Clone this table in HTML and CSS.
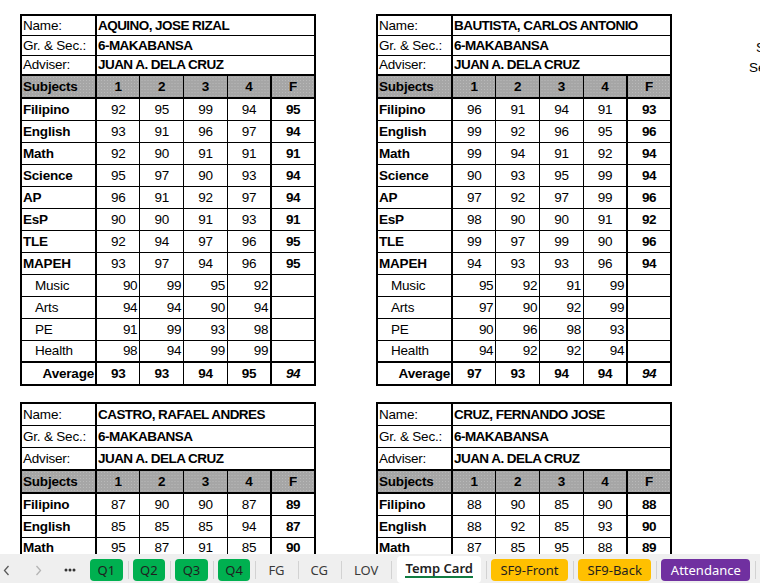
FILE: index.html
```html
<!DOCTYPE html>
<html>
<head>
<meta charset="utf-8">
<link rel="stylesheet" href="styles.css">
</head>
<body>
<main class="sheet">
  <table class="card">
    <colgroup><col class="c-lab"><col class="c-q"><col class="c-q"><col class="c-q"><col class="c-q"><col class="c-q"></colgroup>
    <tr class="info"><th class="lab">Name:</th><td colspan="5">AQUINO, JOSE RIZAL</td></tr>
    <tr class="info"><th class="lab">Gr. &amp; Sec.:</th><td colspan="5">6-MAKABANSA</td></tr>
    <tr class="info adv"><th class="lab">Adviser:</th><td colspan="5">JUAN A. DELA CRUZ</td></tr>
    <tr class="head"><th class="lab">Subjects</th><th>1</th><th>2</th><th>3</th><th>4</th><th class="fc">F</th></tr>
    <tr class="subj"><th class="lab">Filipino</th><td>92</td><td>95</td><td>99</td><td>94</td><td class="fc">95</td></tr>
    <tr class="subj"><th class="lab">English</th><td>93</td><td>91</td><td>96</td><td>97</td><td class="fc">94</td></tr>
    <tr class="subj"><th class="lab">Math</th><td>92</td><td>90</td><td>91</td><td>91</td><td class="fc">91</td></tr>
    <tr class="subj"><th class="lab">Science</th><td>95</td><td>97</td><td>90</td><td>93</td><td class="fc">94</td></tr>
    <tr class="subj"><th class="lab">AP</th><td>96</td><td>91</td><td>92</td><td>97</td><td class="fc">94</td></tr>
    <tr class="subj"><th class="lab">EsP</th><td>90</td><td>90</td><td>91</td><td>93</td><td class="fc">91</td></tr>
    <tr class="subj"><th class="lab">TLE</th><td>92</td><td>94</td><td>97</td><td>96</td><td class="fc">95</td></tr>
    <tr class="subj"><th class="lab">MAPEH</th><td>93</td><td>97</td><td>94</td><td>96</td><td class="fc">95</td></tr>
    <tr class="sub"><th class="lab">Music</th><td>90</td><td>99</td><td>95</td><td>92</td><td class="fc"></td></tr>
    <tr class="sub"><th class="lab">Arts</th><td>94</td><td>94</td><td>90</td><td>94</td><td class="fc"></td></tr>
    <tr class="sub"><th class="lab">PE</th><td>91</td><td>99</td><td>93</td><td>98</td><td class="fc"></td></tr>
    <tr class="sub"><th class="lab">Health</th><td>98</td><td>94</td><td>99</td><td>99</td><td class="fc"></td></tr>
    <tr class="avg"><th class="lab">Average</th><td>93</td><td>93</td><td>94</td><td>95</td><td class="fc">94</td></tr>
  </table>

  <table class="card">
    <colgroup><col class="c-lab"><col class="c-q"><col class="c-q"><col class="c-q"><col class="c-q"><col class="c-q"></colgroup>
    <tr class="info"><th class="lab">Name:</th><td colspan="5">BAUTISTA, CARLOS ANTONIO</td></tr>
    <tr class="info"><th class="lab">Gr. &amp; Sec.:</th><td colspan="5">6-MAKABANSA</td></tr>
    <tr class="info adv"><th class="lab">Adviser:</th><td colspan="5">JUAN A. DELA CRUZ</td></tr>
    <tr class="head"><th class="lab">Subjects</th><th>1</th><th>2</th><th>3</th><th>4</th><th class="fc">F</th></tr>
    <tr class="subj"><th class="lab">Filipino</th><td>96</td><td>91</td><td>94</td><td>91</td><td class="fc">93</td></tr>
    <tr class="subj"><th class="lab">English</th><td>99</td><td>92</td><td>96</td><td>95</td><td class="fc">96</td></tr>
    <tr class="subj"><th class="lab">Math</th><td>99</td><td>94</td><td>91</td><td>92</td><td class="fc">94</td></tr>
    <tr class="subj"><th class="lab">Science</th><td>90</td><td>93</td><td>95</td><td>99</td><td class="fc">94</td></tr>
    <tr class="subj"><th class="lab">AP</th><td>97</td><td>92</td><td>97</td><td>99</td><td class="fc">96</td></tr>
    <tr class="subj"><th class="lab">EsP</th><td>98</td><td>90</td><td>90</td><td>91</td><td class="fc">92</td></tr>
    <tr class="subj"><th class="lab">TLE</th><td>99</td><td>97</td><td>99</td><td>90</td><td class="fc">96</td></tr>
    <tr class="subj"><th class="lab">MAPEH</th><td>94</td><td>93</td><td>93</td><td>96</td><td class="fc">94</td></tr>
    <tr class="sub"><th class="lab">Music</th><td>95</td><td>92</td><td>91</td><td>99</td><td class="fc"></td></tr>
    <tr class="sub"><th class="lab">Arts</th><td>97</td><td>90</td><td>92</td><td>99</td><td class="fc"></td></tr>
    <tr class="sub"><th class="lab">PE</th><td>90</td><td>96</td><td>98</td><td>93</td><td class="fc"></td></tr>
    <tr class="sub"><th class="lab">Health</th><td>94</td><td>92</td><td>92</td><td>94</td><td class="fc"></td></tr>
    <tr class="avg"><th class="lab">Average</th><td>97</td><td>93</td><td>94</td><td>94</td><td class="fc">94</td></tr>
  </table>

  <div class="side">
    <div class="side-line side-a">SY:</div>
    <div class="side-line side-b">Sec</div>
  </div>

  <table class="card card-tall">
    <colgroup><col class="c-lab"><col class="c-q"><col class="c-q"><col class="c-q"><col class="c-q"><col class="c-q"></colgroup>
    <tr class="info"><th class="lab">Name:</th><td colspan="5">CASTRO, RAFAEL ANDRES</td></tr>
    <tr class="info"><th class="lab">Gr. &amp; Sec.:</th><td colspan="5">6-MAKABANSA</td></tr>
    <tr class="info adv"><th class="lab">Adviser:</th><td colspan="5">JUAN A. DELA CRUZ</td></tr>
    <tr class="head"><th class="lab">Subjects</th><th>1</th><th>2</th><th>3</th><th>4</th><th class="fc">F</th></tr>
    <tr class="subj"><th class="lab">Filipino</th><td>87</td><td>90</td><td>90</td><td>87</td><td class="fc">89</td></tr>
    <tr class="subj"><th class="lab">English</th><td>85</td><td>85</td><td>85</td><td>94</td><td class="fc">87</td></tr>
    <tr class="subj"><th class="lab">Math</th><td>95</td><td>87</td><td>91</td><td>85</td><td class="fc">90</td></tr>
  </table>

  <table class="card card-tall">
    <colgroup><col class="c-lab"><col class="c-q"><col class="c-q"><col class="c-q"><col class="c-q"><col class="c-q"></colgroup>
    <tr class="info"><th class="lab">Name:</th><td colspan="5">CRUZ, FERNANDO JOSE</td></tr>
    <tr class="info"><th class="lab">Gr. &amp; Sec.:</th><td colspan="5">6-MAKABANSA</td></tr>
    <tr class="info adv"><th class="lab">Adviser:</th><td colspan="5">JUAN A. DELA CRUZ</td></tr>
    <tr class="head"><th class="lab">Subjects</th><th>1</th><th>2</th><th>3</th><th>4</th><th class="fc">F</th></tr>
    <tr class="subj"><th class="lab">Filipino</th><td>88</td><td>90</td><td>85</td><td>90</td><td class="fc">88</td></tr>
    <tr class="subj"><th class="lab">English</th><td>88</td><td>92</td><td>85</td><td>93</td><td class="fc">90</td></tr>
    <tr class="subj"><th class="lab">Math</th><td>87</td><td>85</td><td>95</td><td>88</td><td class="fc">89</td></tr>
  </table>
</main>

<nav class="tabs">
  <span class="nav nav-prev"><svg width="7" height="11" viewBox="0 0 7 11"><path d="M5.5 1 L1.5 5.5 L5.5 10" fill="none" stroke="#5a5a5a" stroke-width="1.3"/></svg></span>
  <span class="nav nav-next"><svg width="7" height="11" viewBox="0 0 7 11"><path d="M1.5 1 L5.5 5.5 L1.5 10" fill="none" stroke="#b4b4b4" stroke-width="1.3"/></svg></span>
  <span class="nav nav-more"><svg width="12" height="4" viewBox="0 0 12 4"><circle cx="2" cy="2" r="1.5" fill="#333"/><circle cx="6" cy="2" r="1.5" fill="#333"/><circle cx="10" cy="2" r="1.5" fill="#333"/></svg></span>
  <span class="tab pill green">Q1</span><span class="sep"></span>
  <span class="tab pill green">Q2</span><span class="sep"></span>
  <span class="tab pill green">Q3</span><span class="sep"></span>
  <span class="tab pill green">Q4</span><span class="sep"></span>
  <span class="tab plain">FG</span><span class="sep"></span>
  <span class="tab plain">CG</span><span class="sep"></span>
  <span class="tab plain">LOV</span><span class="sep sep-wide"></span>
  <span class="tab active"><span class="active-text">Temp Card</span></span><span class="sep"></span>
  <span class="tab pill yellow">SF9-Front</span><span class="sep"></span>
  <span class="tab pill yellow">SF9-Back</span><span class="sep"></span>
  <span class="tab pill purple">Attendance</span><span class="sep"></span>
</nav>
<div class="foot"></div>
</body>
</html>
```

FILE: styles.css
```css
* { box-sizing: border-box; margin: 0; padding: 0; }
html, body { width: 760px; height: 588px; overflow: hidden; background: #fff; }
body {
  display: flex;
  flex-direction: column;
  font-family: "Liberation Sans", Arial, sans-serif;
  color: #000;
}

.sheet {
  flex: none;
  height: 554px;
  overflow: hidden;
  display: grid;
  grid-template-columns: 294px 294px 80px;
  column-gap: 62px;
  row-gap: 16px;
  align-content: start;
  align-items: start;
  padding: 14px 0 0 20px;
}

.card {
  width: 294px;
  table-layout: fixed;
  border-collapse: collapse;
  border: 2px solid #000;
}
.c-lab { width: 75px; }
.c-q { width: 43.8px; }

.card th, .card td {
  border: 1px solid #000;
  padding: 0 2px;
  font-size: 13.5px;
  font-weight: normal;
  text-align: center;
  white-space: nowrap;
  overflow: hidden;
  height: 22px;
  line-height: 15px;
}
.card td { letter-spacing: -0.3px; }
.card .lab { text-align: left; border-right: 2px solid #000; padding-left: 1px; letter-spacing: -0.2px; }
.card .fc { border-left: 2px solid #000; font-weight: bold; }

.card .info th, .card .info td { height: 20px; }
.card .info td { text-align: left; font-weight: bold; letter-spacing: -0.55px; padding-left: 1px; }
.card-tall .info th, .card-tall .info td { height: 22px; }
.card-tall .adv th, .card-tall .adv td { height: 23px; }

.card .head th {
  height: 23px;
  font-weight: bold;
  border-top: 2px solid #000;
  border-bottom: 2px solid #000;
  background-color: #a6a6a6;
  background-image: radial-gradient(circle, #b9b9b9 0.7px, transparent 0.9px);
  background-size: 3px 3px;
}
.card .head .lab { text-align: left; }

.card .subj .lab { font-weight: bold; }

.card .sub .lab { padding-left: 13px; }
.card .sub td { text-align: right; padding-right: 2px; }

.card .avg th, .card .avg td { border-top: 2px solid #000; font-weight: bold; height: 23px; }
.card .avg .lab { text-align: right; padding-right: 1px; }
.card .avg .fc { font-style: italic; text-align: center; }

.side {
  padding: 24px 0 0 0;
  font-size: 13.5px;
  line-height: 20px;
}
.side-a { padding-left: 24px; }
.side-b { padding-left: 17px; }

/* sheet tab bar */
.tabs {
  flex: none;
  height: 29px;
  background: #efefef;
  display: flex;
  align-items: center;
  padding-top: 3px;
  font-family: "Noto Sans", "Open Sans", sans-serif;
  font-size: 13px;
  color: #1f1f1f;
  overflow: hidden;
}
.tabs > * { flex: none; }
.nav { display: flex; align-items: center; justify-content: center; height: 22px; }
.nav-prev { width: 12px; }
.nav-next { width: 52px; }
.nav-more { width: 12px; margin-right: 14px; }

.tab {
  height: 22px;
  display: flex;
  align-items: center;
  white-space: nowrap;
  line-height: 1;
}
.pill { border-radius: 4px; padding: 0 7.5px; }
.green { background: #00b050; }
.yellow { background: #ffc000; padding: 0 9.5px; }
.purple { background: #7030a0; color: #fff; padding: 0 9.5px; }
.plain { padding: 0 8px; color: #3a3a3a; }

.active {
  height: 27px;
  margin-top: -2px;
  background: #fff;
  border-radius: 4px;
  padding: 0 8px;
  font-weight: 600;
  color: #222;
}
.active-text {
  border-bottom: 2px solid #107c41;
  padding: 2px 0 1px;
}

.sep {
  width: 1px;
  height: 18px;
  background: #d2d2d2;
  margin: 0 4px 0 5px;
}
.sep-wide { margin-right: 5px; }

.foot { flex: none; height: 5px; background: #fff; }
```
